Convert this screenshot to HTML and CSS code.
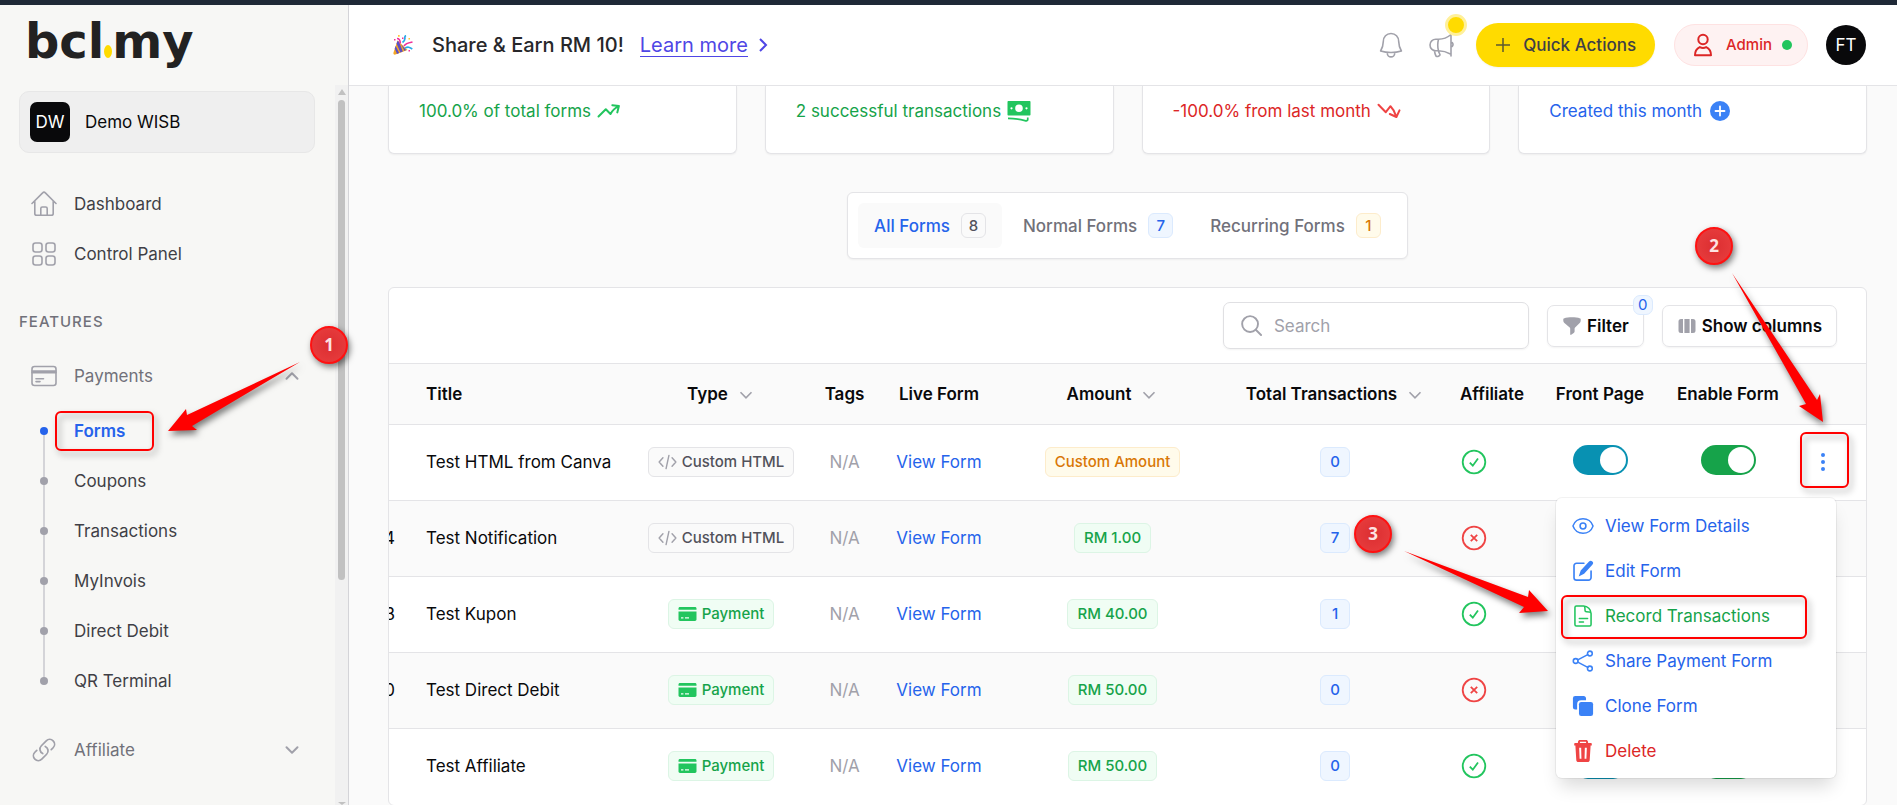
FILE: index.html
```html
<!DOCTYPE html>
<html lang="en">
<head>
    <meta charset="UTF-8">
    <meta name="viewport" content="width=device-width, initial-scale=1.0">
    <title>Forms - bcl.my</title>
    <link rel="stylesheet" href="styles.css">
</head>
<body>
    <!-- Icon sprite -->
    <svg class="sprite" aria-hidden="true">
        <symbol id="i-home" viewBox="0 0 26 26"><path d="M1 12.5 11.9 1.6a1.5 1.5 0 0 1 2.2 0L25 12.5M3.8 10v12.5c0 1 .8 1.8 1.8 1.8h14.8c1 0 1.8-.8 1.8-1.8V10M9.8 24v-6.500c0-.8.7-1.500 1.500-1.500h3.400c.8 0 1.500.7 1.500 1.500V24"/></symbol>
        <symbol id="i-grid" viewBox="0 0 26 26"><rect x="2" y="2" width="9" height="9" rx="2.500"/><rect x="15" y="2" width="9" height="9" rx="2.500"/><rect x="2" y="15" width="9" height="9" rx="2.500"/><rect x="15" y="15" width="9" height="9" rx="2.500"/></symbol>
        <symbol id="i-card" viewBox="0 0 26 26"><rect x="1" y="3.500" width="24" height="19" rx="2.500"/><path d="M1 8h24M1 9.600h24M5 15.700h7.500M5 18.600h4"/></symbol>
        <symbol id="i-link" viewBox="0 0 24 24"><path d="M13.190 8.688a4.500 4.500 0 0 1 1.242 7.244l-4.500 4.500a4.500 4.500 0 0 1-6.364-6.364l1.757-1.757m13.350-.622 1.757-1.757a4.500 4.500 0 0 0-6.364-6.364l-4.500 4.500a4.500 4.500 0 0 0 1.242 7.244"/></symbol>
        <symbol id="i-down" viewBox="0 0 14 14"><path d="m1.500 4.200 5.500 5.600 5.500-5.600"/></symbol>
        <symbol id="i-up" viewBox="0 0 14 14"><path d="m1.500 9.800 5.500-5.600 5.500 5.600"/></symbol>
        <symbol id="i-bell" viewBox="0 0 24 26"><path d="M12 1.500c-4.600 0-7.600 3.400-7.700 7.900C4.200 13.500 3.400 16 1.600 19c3.300 1 6.600 1.500 10.400 1.500s7.100-.5 10.400-1.500c-1.800-3-2.600-5.500-2.700-9.600C19.600 4.900 16.600 1.500 12 1.500ZM8.300 20.300v.9a3.700 3.700 0 0 0 7.400 0v-.9"/></symbol>
        <symbol id="i-horn" viewBox="0 0 26 26"><path d="M10.500 7.200H7.800a5.800 5.800 0 0 0 0 11.600h2.700c4.600 0 8.700 1.400 12.500 3.500V2.500c-3.800 3.300-7.900 4.700-12.500 4.700Zm0 0c-1 3.800-1 7.800 0 11.600M23 1v23M24.200 10.500c.8 1 .8 3 0 4M6.500 18.800c.2 1.700.6 3.200 1.300 4.800.4 1 1.600 1.200 2.500.7l.9-.5c.8-.5.9-1.300.4-2.100-.5-.9-.9-1.800-1.100-2.700"/></symbol>
        <symbol id="i-user" viewBox="0 0 20 24"><circle cx="10" cy="6.500" r="4.700"/><path d="M2 22.300c0-4.200 1.700-6.800 4.800-8.200 2 1.100 4.400 1.100 6.400 0 3.100 1.400 4.800 4 4.800 8.200Z"/></symbol>
        <symbol id="i-trend-up" viewBox="0 0 24 16"><path d="m1.500 13.500 7.300-7.300 4.700 4.800c2-3.500 4.200-5.900 7.800-7.600M15.300 2.200l6.600.8-1.600 6.400"/></symbol>
        <symbol id="i-trend-down" viewBox="0 0 24 16"><path d="m1.500 1.800 7.300 7.400 4.700-6c2.800 2.800 4.500 6 5.700 10.200M12.800 11l6.600 3 3.100-6.700"/></symbol>
        <symbol id="i-money" viewBox="0 0 24 22"><path fill-rule="evenodd" d="M1.500 1h21c.6 0 1 .4 1 1v12.500c0 .6-.4 1-1 1h-21c-.6 0-1-.4-1-1V2c0-.6.4-1 1-1Zm10.500 3.400a3.800 3.800 0 1 0 0 7.600 3.800 3.800 0 0 0 0-7.600ZM4.500 7.200a1.100 1.100 0 1 0 0 2.200 1.100 1.100 0 0 0 0-2.200Zm15 0a1.100 1.100 0 1 0 0 2.200 1.100 1.100 0 0 0 0-2.200Z"/><path d="M1 17.600c6.200 0 12.200.8 18 2.400.5.100.9-.200.9-.7v-1.700h1.700v1.900c0 1.500-1.400 2.600-2.900 2.200C13 20.100 7.100 19.300 1 19.300Z"/></symbol>
        <symbol id="i-plus-circle" viewBox="0 0 20 20"><circle cx="10" cy="10" r="10"/><path d="M10 5.500v9M5.500 10h9" stroke="#fff" stroke-width="1.800" stroke-linecap="round"/></symbol>
        <symbol id="i-search" viewBox="0 0 22 22"><circle cx="9.500" cy="9.500" r="8.300"/><path d="m15.500 15.500 5.500 5.500"/></symbol>
        <symbol id="i-funnel" viewBox="0 0 18 18"><path d="M.8 1.400C3.300.6 6.100.3 9 .3s5.700.3 8.200 1.100c.3.100.5.400.5.700v1.600c0 .9-.4 1.700-1 2.300l-4.600 4.600c-.3.300-.5.700-.5 1.200v2.700c0 .6-.3 1.200-.9 1.500l-2.500 1.800c-.5.300-1-.1-1-.6v-5.400c0-.5-.2-.9-.5-1.200L1.400 6c-.7-.6-1.100-1.400-1.100-2.300V2.100c0-.3.200-.6.500-.7Z"/></symbol>
        <symbol id="i-columns" viewBox="0 0 18 16"><path d="M3 1h2v14H3a2.500 2.500 0 0 1-2.500-2.500v-9A2.500 2.500 0 0 1 3 1ZM6.400 1h5.200v14H6.400ZM13 1h2a2.500 2.500 0 0 1 2.500 2.500v9A2.500 2.500 0 0 1 15 15h-2Z"/></symbol>
        <symbol id="i-code" viewBox="0 0 20 18"><path d="M5.200 4.500 1.200 9l4 4.500M14.800 4.500l4 4.500-4 4.500M11.500 2l-3 14"/></symbol>
        <symbol id="i-pay" viewBox="0 0 18 14"><path d="M1.500 0h15c.8 0 1.500.6 1.500 1.400V2.800H0V1.400C0 .6.700 0 1.500 0ZM0 4.600h18v8c0 .8-.7 1.400-1.500 1.400h-15C.7 14 0 13.400 0 12.600Z"/><path d="M2.500 10.800h2.400M6.500 10.800h4" stroke="#f0fdf4" stroke-width="1.200"/></symbol>
        <symbol id="i-check" viewBox="0 0 26 26"><circle cx="13" cy="13" r="11.300"/><path d="m8.800 13.600 3 3.100 5.200-7.200"/></symbol>
        <symbol id="i-cross" viewBox="0 0 26 26"><circle cx="13" cy="13" r="11.300"/><path d="m9.800 9.800 6.400 6.400m0-6.400-6.400 6.400"/></symbol>
        <symbol id="i-dots" viewBox="0 0 6 20"><circle cx="3" cy="3" r="2"/><circle cx="3" cy="10" r="2"/><circle cx="3" cy="17" r="2"/></symbol>
        <symbol id="i-eye" viewBox="0 0 24 24"><path d="M1.200 12.400a1.300 1.300 0 0 1 0-.8C2.700 7.200 7 4 12 4s9.300 3.200 10.800 7.600a1.300 1.300 0 0 1 0 .8C21.300 16.800 17 20 12 20S2.700 16.800 1.200 12.400Z"/><circle cx="12" cy="12" r="3.200"/></symbol>
        <symbol id="i-edit" viewBox="0 0 24 24"><path d="M13 3.500H5A2.800 2.800 0 0 0 2.200 6.300v13A2.800 2.800 0 0 0 5 22h13a2.800 2.800 0 0 0 2.800-2.800V12" fill="none" stroke="currentColor" stroke-width="1.800" stroke-linecap="round"/><path d="M18.600 1.600a2.500 2.500 0 0 1 3.600 3.600l-9 9.800-5.900 2.900 2.200-6.400Z"/></symbol>
        <symbol id="i-file" viewBox="0 0 24 24"><path d="M12.700 1H4.800C3.900 1 3.200 1.700 3.200 2.600v18.800c0 .9.700 1.600 1.600 1.600h14.400c.9 0 1.600-.7 1.600-1.600V9.200C20.800 5 17 1 12.700 1Zm0 0c1.500 0 1.500 2 1.500 4.700 0 1 .6 1.700 1.500 1.700 3 0 5.100.1 5.100 1.800M8 14.700h9M8 18.500h4.500"/></symbol>
        <symbol id="i-share" viewBox="0 0 24 24"><circle cx="4" cy="12" r="2.600"/><circle cx="19.500" cy="3.800" r="2.600"/><circle cx="19.500" cy="20.200" r="2.600"/><path d="M6.300 10.800 17.200 5M6.300 13.200 17.200 19"/></symbol>
        <symbol id="i-clone" viewBox="0 0 24 24"><path d="M3.500 1h9.300C14.200 1 15.300 2.100 15.300 3.500v2.100H10A4.400 4.400 0 0 0 5.600 10v5.800H3.500A2.500 2.500 0 0 1 1 13.300V3.500A2.500 2.500 0 0 1 3.500 1Z"/><rect x="7.600" y="7.600" width="15.400" height="15.400" rx="2.500"/></symbol>
        <symbol id="i-trash" viewBox="0 0 24 24"><path fill-rule="evenodd" d="M8.500 0h7c1 0 1.700.7 1.900 1.600l.2 1.600h3c.6 0 1 .4 1 1V6h-1.300l-1 16c-.1 1.200-1 2-2.200 2H6.900c-1.200 0-2.100-.8-2.200-2L3.700 6H2.400V4.200c0-.6.4-1 1-1h3l.2-1.600C6.800.7 7.500 0 8.500 0Zm.3 1.800-.3 1.400h7l-.3-1.400ZM7.800 8.500l.5 12h2l-.3-12Zm6.200 0-.3 12h2l.5-12Z"/></symbol>
    </svg>

    <div class="topline"></div>
    <div class="app">
        <aside class="sidebar">
            <a class="logo" href="#">bcl<span class="logo-dot"></span>my</a>
            <div class="sidebar-scroll">
                <div class="sidebar-content">
                    <button class="account" type="button"><span class="account-avatar">DW</span>Demo WISB</button>
                    <nav>
                        <a class="nav-item" href="#"><svg><use href="#i-home"/></svg>Dashboard</a>
                        <a class="nav-item" href="#"><svg><use href="#i-grid"/></svg>Control Panel</a>
                        <h2 class="nav-title">Features</h2>
                        <button class="nav-item nav-group" type="button"><svg><use href="#i-card"/></svg>Payments<svg class="caret"><use href="#i-up"/></svg></button>
                        <ul class="subnav">
                            <li class="active"><a href="#">Forms</a></li>
                            <li><a href="#">Coupons</a></li>
                            <li><a href="#">Transactions</a></li>
                            <li><a href="#">MyInvois</a></li>
                            <li><a href="#">Direct Debit</a></li>
                            <li><a href="#">QR Terminal</a></li>
                        </ul>
                        <button class="nav-item nav-group" type="button"><svg><use href="#i-link"/></svg>Affiliate<svg class="caret"><use href="#i-down"/></svg></button>
                    </nav>
                </div>
                <div class="scrollbar">
                    <span class="scroll-up"></span>
                    <span class="scroll-thumb"></span>
                    <span class="scroll-down"></span>
                </div>
            </div>
        </aside>

        <div class="page">
            <header class="header">
                <svg class="party" viewBox="0 0 20 20">
                    <path fill="#f5a623" d="M4.500 5.500 14.500 15 2.500 19.500C1 20 0 19 .5 17.500Z"/>
                    <path fill="#5b4fc4" d="m3.500 8.500 1.200-2.800 1.500 1.300 3.600 9.600-2.400.9ZM1.700 13.500l1-2.600 3.500 7.200-2.200.8ZM8 9l5 6-1.500.9Z"/>
                    <path fill="none" stroke="#f0309a" stroke-width="1.700" d="M4 3.500c2 0 3.200 1.500 3.300 5M11 11c2-3 4.500-3.200 8.500-4"/>
                    <path fill="none" stroke="#2aa9e8" stroke-width="1.700" d="M13 .5C9.800 2 14.500 4 9.500 7.500M12 13c3-1.300 4-1 7.300 1"/>
                    <path fill="#ffc933" d="M5 0h1.700v1.700H5zM15.500 3H17v1.500h-1.500z"/>
                    <path fill="#f0309a" d="M1 4h1.500v1.500H1zM15.500 15H17v1.500h-1.500zM9 2.500h1.500V4H9z"/>
                </svg>
                <strong class="promo">Share &amp; Earn RM 10!</strong>
                <a class="learn" href="#"><span>Learn more</span><svg viewBox="0 0 10 16"><path d="m2 2 6 6-6 6"/></svg></a>
                <div class="header-actions">
                    <button class="icon-btn bell" type="button" aria-label="Notifications"><svg><use href="#i-bell"/></svg></button>
                    <button class="icon-btn horn" type="button" aria-label="Announcements"><svg><use href="#i-horn"/></svg><span class="ping"></span></button>
                    <button class="quick" type="button"><svg viewBox="0 0 16 16"><path d="M8 1v14M1 8h14"/></svg>Quick Actions</button>
                    <button class="role" type="button"><svg><use href="#i-user"/></svg>Admin<span class="online"></span></button>
                    <button class="avatar" type="button">FT</button>
                </div>
            </header>

            <main class="main">
                <section class="stats">
                    <div class="stat green">100.0% of total forms<svg class="line"><use href="#i-trend-up"/></svg></div>
                    <div class="stat green">2 successful transactions<svg><use href="#i-money"/></svg></div>
                    <div class="stat red">-100.0% from last month<svg class="line"><use href="#i-trend-down"/></svg></div>
                    <div class="stat blue">Created this month<svg class="plus"><use href="#i-plus-circle"/></svg></div>
                </section>

                <div class="tabs">
                    <button class="tab active" type="button">All Forms<span class="count gray">8</span></button>
                    <button class="tab" type="button">Normal Forms<span class="count blue">7</span></button>
                    <button class="tab" type="button">Recurring Forms<span class="count amber">1</span></button>
                </div>

                <section class="card">
                    <div class="toolbar">
                        <label class="search">
                            <svg><use href="#i-search"/></svg>
                            <input type="search" placeholder="Search" aria-label="Search">
                        </label>
                        <button class="tool" type="button"><svg><use href="#i-funnel"/></svg>Filter<span class="tool-count">0</span></button>
                        <button class="tool" type="button"><svg><use href="#i-columns"/></svg>Show columns</button>
                    </div>

                    <table class="forms">
                        <colgroup>
                            <col class="c-id"><col class="c-title"><col class="c-type"><col class="c-tags"><col class="c-live"><col class="c-amount"><col class="c-total"><col class="c-aff"><col class="c-front"><col class="c-enable"><col class="c-act">
                        </colgroup>
                        <thead>
                            <tr>
                                <th></th>
                                <th class="left">Title</th>
                                <th>Type<svg><use href="#i-down"/></svg></th>
                                <th>Tags</th>
                                <th>Live Form</th>
                                <th>Amount<svg><use href="#i-down"/></svg></th>
                                <th>Total Transactions<svg><use href="#i-down"/></svg></th>
                                <th>Affiliate</th>
                                <th>Front Page</th>
                                <th>Enable Form</th>
                                <th></th>
                            </tr>
                        </thead>
                        <tbody>
                            <tr>
                                <td></td>
                                <td class="left">Test HTML from Canva</td>
                                <td><span class="badge gray"><svg class="line"><use href="#i-code"/></svg>Custom HTML</span></td>
                                <td class="muted">N/A</td>
                                <td><a href="#">View Form</a></td>
                                <td><span class="badge amber">Custom Amount</span></td>
                                <td><span class="badge blue">0</span></td>
                                <td class="status"><svg class="yes"><use href="#i-check"/></svg></td>
                                <td><input class="switch teal" type="checkbox" aria-label="Front page" checked></td>
                                <td><input class="switch" type="checkbox" aria-label="Enable form" checked></td>
                                <td class="actions">
                                    <button class="more" type="button" aria-label="Actions"><svg><use href="#i-dots"/></svg></button>
                                    <div class="menu">
                                        <a href="#"><svg class="line"><use href="#i-eye"/></svg>View Form Details</a>
                                        <a href="#"><svg><use href="#i-edit"/></svg>Edit Form</a>
                                        <a class="green" href="#"><svg class="line"><use href="#i-file"/></svg>Record Transactions</a>
                                        <a href="#"><svg class="line"><use href="#i-share"/></svg>Share Payment Form</a>
                                        <a href="#"><svg><use href="#i-clone"/></svg>Clone Form</a>
                                        <a class="red" href="#"><svg><use href="#i-trash"/></svg>Delete</a>
                                    </div>
                                </td>
                            </tr>
                            <tr>
                                <td><span class="id">4</span></td>
                                <td class="left">Test Notification</td>
                                <td><span class="badge gray"><svg class="line"><use href="#i-code"/></svg>Custom HTML</span></td>
                                <td class="muted">N/A</td>
                                <td><a href="#">View Form</a></td>
                                <td><span class="badge green">RM 1.00</span></td>
                                <td><span class="badge blue">7</span></td>
                                <td class="status"><svg class="no"><use href="#i-cross"/></svg></td>
                                <td><input class="switch teal" type="checkbox" aria-label="Front page" checked></td>
                                <td><input class="switch" type="checkbox" aria-label="Enable form" checked></td>
                                <td class="actions"><button class="more" type="button" aria-label="Actions"><svg><use href="#i-dots"/></svg></button></td>
                            </tr>
                            <tr>
                                <td><span class="id">3</span></td>
                                <td class="left">Test Kupon</td>
                                <td><span class="badge green"><svg><use href="#i-pay"/></svg>Payment</span></td>
                                <td class="muted">N/A</td>
                                <td><a href="#">View Form</a></td>
                                <td><span class="badge green">RM 40.00</span></td>
                                <td><span class="badge blue">1</span></td>
                                <td class="status"><svg class="yes"><use href="#i-check"/></svg></td>
                                <td><input class="switch teal" type="checkbox" aria-label="Front page" checked></td>
                                <td><input class="switch" type="checkbox" aria-label="Enable form" checked></td>
                                <td class="actions"><button class="more" type="button" aria-label="Actions"><svg><use href="#i-dots"/></svg></button></td>
                            </tr>
                            <tr>
                                <td><span class="id">0</span></td>
                                <td class="left">Test Direct Debit</td>
                                <td><span class="badge green"><svg><use href="#i-pay"/></svg>Payment</span></td>
                                <td class="muted">N/A</td>
                                <td><a href="#">View Form</a></td>
                                <td><span class="badge green">RM 50.00</span></td>
                                <td><span class="badge blue">0</span></td>
                                <td class="status"><svg class="no"><use href="#i-cross"/></svg></td>
                                <td><input class="switch teal" type="checkbox" aria-label="Front page" checked></td>
                                <td><input class="switch" type="checkbox" aria-label="Enable form" checked></td>
                                <td class="actions"><button class="more" type="button" aria-label="Actions"><svg><use href="#i-dots"/></svg></button></td>
                            </tr>
                            <tr>
                                <td></td>
                                <td class="left">Test Affiliate</td>
                                <td><span class="badge green"><svg><use href="#i-pay"/></svg>Payment</span></td>
                                <td class="muted">N/A</td>
                                <td><a href="#">View Form</a></td>
                                <td><span class="badge green">RM 50.00</span></td>
                                <td><span class="badge blue">0</span></td>
                                <td class="status"><svg class="yes"><use href="#i-check"/></svg></td>
                                <td><input class="switch teal" type="checkbox" aria-label="Front page" checked></td>
                                <td><input class="switch" type="checkbox" aria-label="Enable form" checked></td>
                                <td class="actions"><button class="more" type="button" aria-label="Actions"><svg><use href="#i-dots"/></svg></button></td>
                            </tr>
                        </tbody>
                    </table>
                </section>
            </main>
        </div>
    </div>

    <!-- Step by step guide markers -->
    <svg class="guide">
        <defs>
            <radialGradient id="step-fill">
                <stop offset="0" stop-color="#dc2e31"/>
                <stop offset="1" stop-color="#e63b3c"/>
            </radialGradient>
        </defs>
        <g class="guide-box">
            <rect x="56" y="412" width="97" height="38" rx="5"/>
            <rect x="1801" y="433" width="47" height="54" rx="5"/>
            <rect x="1562" y="596" width="244" height="42" rx="5"/>
        </g>
        <g class="guide-arrow">
            <path d="M300 362 187 415l-1-6-18 22 29-1-5-4Z"/>
            <path d="m1732 273 74 131-7 2 24 16-3-28-3 6Z"/>
            <path d="m1404 551 124 46 1-7 19 21-29 2 5-6Z"/>
        </g>
        <g class="guide-step">
            <circle cx="329" cy="345" r="18"/><text x="329" y="351">1</text>
            <circle cx="1714" cy="246" r="18"/><text x="1714" y="252">2</text>
            <circle cx="1373" cy="534" r="18"/><text x="1373" y="540">3</text>
        </g>
    </svg>
</body>
</html>
```

FILE: styles.css
```css
* {
    margin: 0;
    padding: 0;
    box-sizing: border-box;
}

body {
    font-family: Inter, "Liberation Sans", sans-serif;
    font-size: 17px;
    line-height: 24px;
    color: #09090b;
    background: #fafafa;
    height: 100vh;
    overflow: hidden;
    position: relative;
    display: flex;
    flex-direction: column;
}

a {
    color: #2563eb;
    text-decoration: none;
}

button,
input {
    font: inherit;
    color: inherit;
    background: none;
    border: none;
}

button {
    cursor: pointer;
}

svg {
    fill: currentColor;
    flex: none;
}

.sprite {
    position: absolute;
    width: 0;
    height: 0;
}

.topline {
    height: 5px;
    flex: none;
    background: #1f2937;
}

.app {
    flex: 1;
    min-height: 0;
    display: flex;
}

/* Sidebar */
.sidebar {
    width: 349px;
    flex: none;
    display: flex;
    flex-direction: column;
    background: #f7f7f5;
    border-right: 1px solid #d4d4d8;
}

.logo {
    display: flex;
    align-items: baseline;
    height: 80px;
    flex: none;
    padding: 6px 0 0 25px;
    font-family: "DejaVu Sans", sans-serif;
    font-size: 48px;
    line-height: 60px;
    font-weight: 700;
    color: #222;
}

.logo-dot {
    width: 8px;
    height: 13px;
    border-radius: 50%;
    background: #ffdb00;
}

.sidebar-scroll {
    flex: 1;
    min-height: 0;
    display: flex;
}

.sidebar-content {
    flex: 1;
    padding: 6px 20px 0 19px;
    overflow: hidden;
}

.account {
    display: flex;
    align-items: center;
    gap: 15px;
    width: 100%;
    height: 62px;
    padding: 0 10px;
    margin-bottom: 26px;
    background: #efefef;
    border: 1px solid #e7e7e7;
    border-radius: 10px;
}

.account-avatar {
    width: 40px;
    line-height: 40px;
    border-radius: 7px;
    background: #09090b;
    color: #fff;
}

.nav-item {
    display: flex;
    align-items: center;
    gap: 17px;
    width: 100%;
    height: 50px;
    padding: 0 12px;
    color: #3f3f46;
    text-align: left;
}

.nav-item svg {
    width: 26px;
    height: 26px;
    fill: none;
    stroke: #a1a1aa;
    stroke-width: 2;
    stroke-linecap: round;
    stroke-linejoin: round;
}

.nav-item svg:first-child {
    stroke-width: 1.6;
}

.nav-item .caret {
    width: 14px;
    height: 14px;
    margin: 0 4px 0 auto;
}

.nav-group {
    color: #71717a;
}

.nav-title {
    height: 72px;
    padding-top: 31px;
    font-size: 15px;
    font-weight: 500;
    letter-spacing: 1px;
    text-transform: uppercase;
    color: #71717a;
}

.subnav {
    list-style: none;
    padding: 5px 0 19px;
}

.subnav li {
    position: relative;
    height: 50px;
    line-height: 50px;
    padding-left: 55px;
}

.subnav a {
    color: #3f3f46;
}

.subnav .active a {
    font-weight: 600;
    color: #2563eb;
}

.subnav li::before {
    content: '';
    position: absolute;
    left: 24px;
    top: 25px;
    width: 2px;
    height: 50px;
    background: #d4d4d8;
}

.subnav li:last-child::before {
    display: none;
}

.subnav li::after {
    content: '';
    position: absolute;
    left: 21px;
    top: 21px;
    width: 8px;
    height: 8px;
    border-radius: 50%;
    background: #a1a1aa;
}

.subnav .active::after {
    background: #2563eb;
}

.scrollbar {
    width: 13px;
    display: flex;
    flex-direction: column;
    align-items: center;
    padding-top: 4px;
    background: #f1f1f1;
}

.scroll-up,
.scroll-down {
    border: 4px solid transparent;
}

.scroll-up {
    border-top: none;
    border-bottom: 6px solid #c1c1c1;
    margin-bottom: 5px;
}

.scroll-thumb {
    width: 7px;
    height: 67%;
    border-radius: 4px;
    background: #c1c1c1;
}

.scroll-down {
    margin-top: auto;
    border-bottom: none;
    border-top: 3px solid #c1c1c1;
}

/* Header */
.page {
    flex: 1;
    min-width: 0;
    display: flex;
    flex-direction: column;
}

.header {
    display: flex;
    align-items: center;
    height: 81px;
    flex: none;
    padding: 0 31px 0 44px;
    background: #fff;
    border-bottom: 1px solid #e4e4e7;
    position: relative;
    z-index: 1;
}

.party {
    width: 20px;
    height: 20px;
}

.promo {
    margin: 0 16px 0 19px;
    font-size: 20px;
    font-weight: 500;
    color: #27272a;
}

.learn {
    display: flex;
    align-items: center;
    gap: 10px;
    font-size: 20px;
    color: #4f46e5;
}

.learn span {
    border-bottom: 1px solid;
    line-height: 22px;
}

.learn svg {
    width: 10px;
    height: 16px;
    fill: none;
    stroke: currentColor;
    stroke-width: 2;
}

.header-actions {
    display: flex;
    align-items: center;
    margin-left: auto;
}

.icon-btn {
    position: relative;
    display: flex;
    color: #a1a1aa;
}

.icon-btn svg {
    width: 26px;
    height: 26px;
    fill: none;
    stroke: currentColor;
    stroke-width: 1.6;
    stroke-linejoin: round;
    stroke-linecap: round;
}

.bell {
    margin-right: 24px;
}

.horn {
    margin-right: 22px;
}

.ping {
    position: absolute;
    right: -13px;
    top: -18px;
    width: 22px;
    height: 22px;
    border-radius: 50%;
    border: 3px solid #fff09a;
    background: #ffdb00;
}

.quick {
    display: flex;
    align-items: center;
    gap: 12px;
    height: 44px;
    padding: 0 19px;
    margin-right: 19px;
    border-radius: 22px;
    background: #ffdb00;
    box-shadow: 0 1px 2px rgba(0, 0, 0, 0.05);
    font-weight: 500;
    color: #3f3f46;
}

.quick svg {
    width: 16px;
    height: 16px;
    stroke: #5c5a30;
    stroke-width: 1.5;
}

.role {
    display: flex;
    align-items: center;
    height: 42px;
    padding: 0 15px 0 18px;
    margin-right: 18px;
    border: 1px solid #fee2e2;
    border-radius: 21px;
    background: #fef2f2;
    font-size: 15px;
    font-weight: 500;
    color: #dc2626;
}

.role svg {
    width: 20px;
    height: 24px;
    margin-right: 13px;
    fill: none;
    stroke: currentColor;
    stroke-width: 2;
    stroke-linejoin: round;
}

.online {
    width: 10px;
    height: 10px;
    margin-left: 10px;
    border-radius: 50%;
    background: #22c55e;
}

.avatar {
    width: 40px;
    height: 40px;
    border-radius: 50%;
    background: #09090b;
    color: #fff;
}

/* Main */
.main {
    flex: 1;
    min-height: 0;
    padding: 0 30px 0 39px;
}

.stats {
    display: grid;
    grid-template-columns: repeat(4, 1fr);
    gap: 28px;
    margin-bottom: 38px;
}

.stat {
    display: flex;
    align-items: center;
    gap: 6px;
    padding: 13px 30px 30px;
    background: #fff;
    border: 1px solid #e4e4e7;
    border-top: none;
    border-radius: 0 0 6px 6px;
    box-shadow: 0 1px 2px rgba(0, 0, 0, 0.05);
}

.stat svg {
    width: 24px;
    height: 22px;
}

.stat .plus {
    width: 20px;
    height: 20px;
    margin-left: 2px;
    color: #3b82f6;
}

.stat .line {
    height: 16px;
    fill: none;
    stroke: currentColor;
    stroke-width: 2;
    stroke-linejoin: round;
    stroke-linecap: round;
}

.stat.green {
    color: #16a34a;
}

.stat.green svg {
    color: #22c55e;
}

.stat.red {
    color: #dc2626;
}

.stat.red svg {
    color: #ef4444;
}

.stat.blue {
    color: #2563eb;
}

.tabs {
    display: flex;
    gap: 5px;
    width: max-content;
    margin: 0 auto 28px;
    padding: 10px;
    background: #fff;
    border: 1px solid #e4e4e7;
    border-radius: 6px;
    box-shadow: 0 1px 2px rgba(0, 0, 0, 0.05);
}

.tab {
    display: flex;
    align-items: center;
    gap: 11px;
    height: 45px;
    padding: 0 16px;
    border-radius: 6px;
    color: #71717a;
    font-weight: 500;
}

.tab.active {
    background: #fafafa;
    color: #2563eb;
}

.count {
    min-width: 25px;
    height: 25px;
    line-height: 23px;
    border: 1px solid;
    border-radius: 6px;
    font-size: 15px;
    text-align: center;
}

.badge.gray,
.count.gray {
    background: #fafafa;
    border-color: #e4e4e7;
    color: #52525b;
}

.badge.blue,
.count.blue {
    background: #eff6ff;
    border-color: #dbeafe;
    color: #2563eb;
}

.badge.amber,
.count.amber {
    background: #fffbeb;
    border-color: #fdeccb;
    color: #d97706;
}

.badge.green {
    background: #f0fdf4;
    border-color: #dcf5e5;
    color: #16a34a;
}

.card {
    background: #fff;
    border: 1px solid #e4e4e7;
    border-radius: 6px;
}

.toolbar {
    display: flex;
    justify-content: flex-end;
    align-items: center;
    gap: 18px;
    height: 75px;
    padding: 0 29px;
}

.search {
    display: flex;
    align-items: center;
    gap: 12px;
    width: 306px;
    height: 47px;
    padding: 0 17px;
    border: 1px solid #e0e0e3;
    border-radius: 7px;
    box-shadow: 0 1px 2px rgba(0, 0, 0, 0.05);
}

.search svg {
    width: 21px;
    height: 21px;
    fill: none;
    stroke: #a1a1aa;
    stroke-width: 2;
    stroke-linecap: round;
}

.search input {
    flex: 1;
    min-width: 0;
    outline: none;
}

.search input::placeholder {
    color: #a1a1aa;
}

.tool {
    position: relative;
    display: flex;
    align-items: center;
    gap: 6px;
    height: 42px;
    padding: 0 14px 0 15px;
    border: 1px solid #e4e4e7;
    border-radius: 7px;
    box-shadow: 0 1px 2px rgba(0, 0, 0, 0.05);
    font-weight: 600;
}

.tool svg {
    width: 18px;
    height: 18px;
    color: #a1a1aa;
}

.tool-count {
    position: absolute;
    right: -10px;
    top: -11px;
    width: 20px;
    height: 20px;
    border: 1px solid #dbeafe;
    border-radius: 7px;
    background: #eff6ff;
    color: #2563eb;
    font-size: 15px;
    font-weight: 400;
    line-height: 18px;
}

.forms {
    width: 100%;
    table-layout: fixed;
    border-collapse: collapse;
    text-align: center;
}

.c-id { width: 18px; }
.c-title { width: 225px; }
.c-type { width: 178px; }
.c-tags { width: 69px; }
.c-live { width: 120px; }
.c-amount { width: 227px; }
.c-total { width: 218px; }
.c-aff { width: 96px; }
.c-front { width: 120px; }
.c-enable { width: 136px; }
.c-act { width: 70px; }

.forms th {
    height: 61px;
    border-top: 1px solid #e4e4e7;
    background: #fafafa;
    font-weight: 600;
    white-space: nowrap;
}

.forms th svg {
    width: 14px;
    height: 14px;
    margin: 0 2px 0 11px;
    vertical-align: -2px;
    fill: none;
    stroke: #a1a1aa;
    stroke-width: 1.6;
}

.forms td {
    height: 76px;
    padding-bottom: 2px;
    border-top: 1px solid #e4e4e7;
}

.forms tbody tr:nth-child(even) {
    background: #fafafa;
}

.forms .left {
    text-align: left;
    padding-left: 19px;
    white-space: nowrap;
}

/* ids are scrolled out to the left, only their last pixels show */
.id {
    display: block;
    width: 6px;
    direction: rtl;
    overflow: hidden;
}

.forms .muted {
    color: #a1a1aa;
}

.badge {
    display: inline-flex;
    align-items: center;
    justify-content: center;
    gap: 5px;
    min-width: 30px;
    height: 30px;
    padding: 0 9px;
    border: 1px solid;
    border-radius: 6px;
    font-size: 15px;
    font-weight: 500;
    white-space: nowrap;
    vertical-align: middle;
}

.badge svg {
    width: 19px;
    height: 14px;
    color: #22c55e;
}

.badge .line {
    height: 18px;
    color: #a1a1aa;
    fill: none;
    stroke: currentColor;
    stroke-width: 1.5;
    stroke-linecap: round;
    stroke-linejoin: round;
}

.forms .status {
    text-align: left;
    padding-left: 17px;
}

.status svg {
    width: 26px;
    height: 26px;
    display: block;
    fill: none;
    stroke: currentColor;
    stroke-width: 1.8;
}

.yes {
    color: #22c55e;
}

.no {
    color: #ef4444;
}

.switch {
    appearance: none;
    display: block;
    width: 55px;
    height: 30px;
    margin: 0 auto 4px;
    padding: 2px;
    border-radius: 15px;
    background: #16a34a;
    cursor: pointer;
}

.switch::before {
    content: '';
    display: block;
    width: 26px;
    height: 26px;
    margin-left: auto;
    border-radius: 50%;
    background: #fff;
}

.switch.teal {
    background: #0891b2;
}

.forms .actions {
    position: relative;
    padding-right: 16px;
}

.more {
    padding: 4px 10px;
    color: #3b82f6;
    vertical-align: middle;
}

.more svg {
    display: block;
    width: 6px;
    height: 20px;
}

.menu {
    position: absolute;
    top: 73px;
    right: 30px;
    z-index: 2;
    width: 280px;
    padding: 5px 0;
    background: #fff;
    border-radius: 6px;
    box-shadow: 0 0 0 1px rgba(0, 0, 0, 0.05), 0 12px 18px -4px rgba(0, 0, 0, 0.15);
}

.menu a {
    display: flex;
    align-items: center;
    gap: 11px;
    height: 45px;
    padding: 0 16px;
}

.menu svg {
    width: 22px;
    height: 22px;
    color: #3b82f6;
}

.menu .line {
    fill: none;
    stroke: currentColor;
    stroke-width: 1.7;
    stroke-linecap: round;
    stroke-linejoin: round;
}

.menu .green {
    color: #16a34a;
}

.menu .green svg {
    color: #22c55e;
}

.menu .red {
    color: #dc2626;
}

.menu .red svg {
    color: #ef4444;
}

/* Guide markers */
.guide {
    position: absolute;
    left: 0;
    top: 0;
    z-index: 5;
    width: 100%;
    height: 100%;
    pointer-events: none;
}

.guide-box {
    fill: none;
    stroke: #f00;
    stroke-width: 2;
    filter: drop-shadow(3px 4px 3px rgba(0, 0, 0, 0.35));
}

.guide-arrow {
    fill: #f00;
    filter: drop-shadow(2px 4px 3px rgba(0, 0, 0, 0.5));
}

.guide-step circle {
    fill: url(#step-fill);
    stroke: #f11;
    stroke-width: 2;
    filter: drop-shadow(2px 3px 3px rgba(0, 0, 0, 0.5));
}

.guide-step text {
    fill: #fde2e2;
    font-family: "Noto Sans", sans-serif;
    font-size: 17px;
    font-weight: 700;
    text-anchor: middle;
}
```
